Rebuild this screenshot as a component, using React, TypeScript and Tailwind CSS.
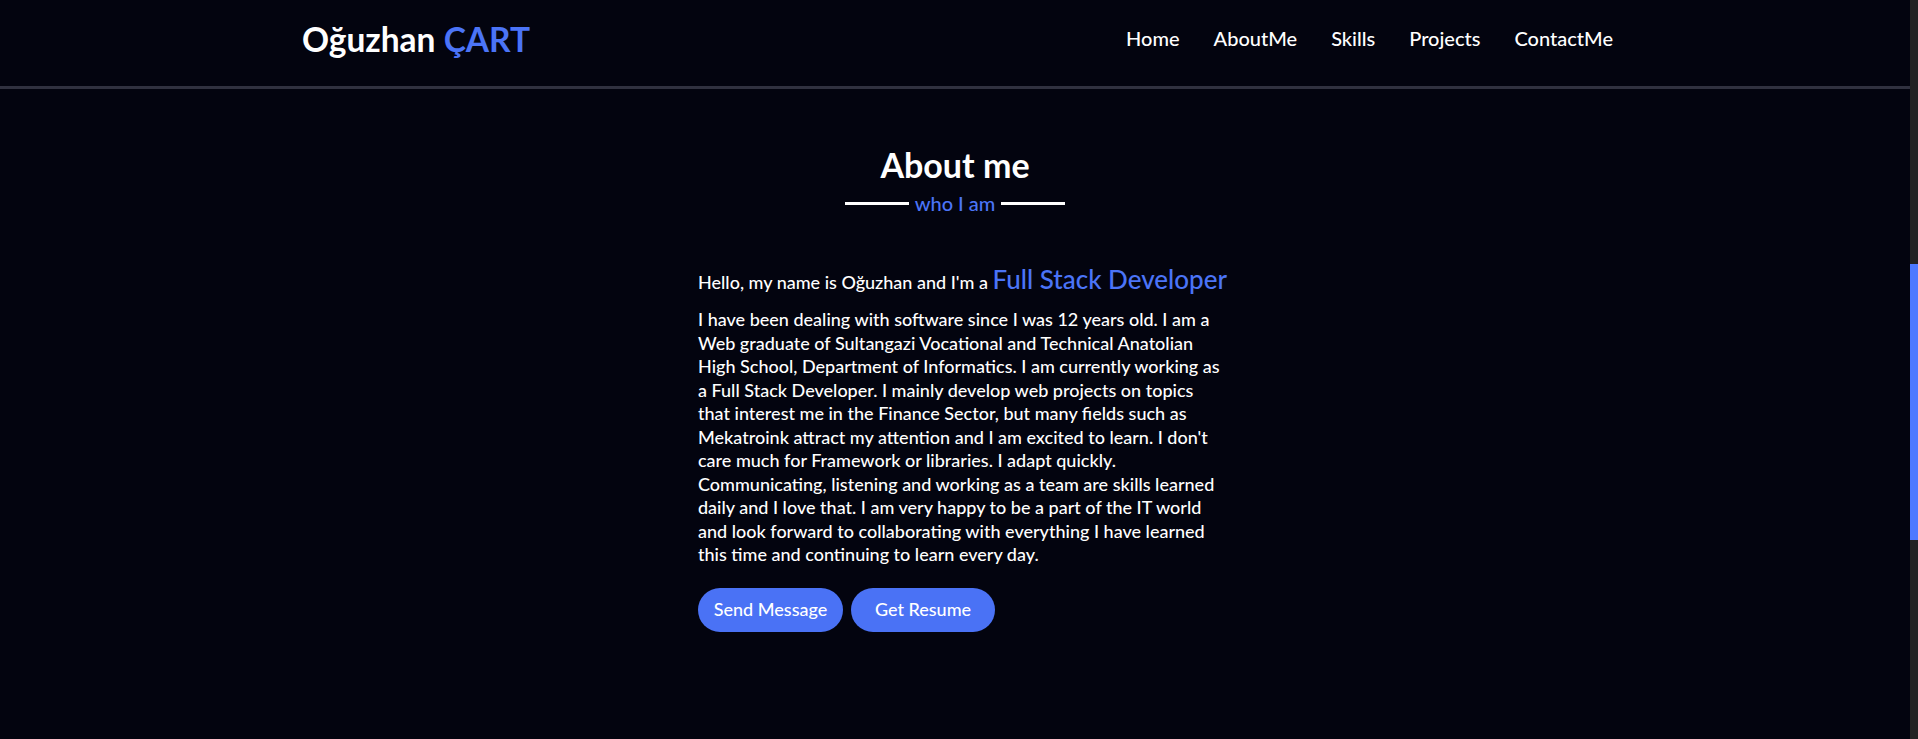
import React from "react";

const navItems = ["Home", "AboutMe", "Skills", "Projects", "ContactMe"];

const aboutLines = [
  "I have been dealing with software since I was 12 years old. I am a",
  "Web graduate of Sultangazi Vocational and Technical Anatolian",
  "High School, Department of Informatics. I am currently working as",
  "a Full Stack Developer. I mainly develop web projects on topics",
  "that interest me in the Finance Sector, but many fields such as",
  "Mekatroink attract my attention and I am excited to learn. I don't",
  "care much for Framework or libraries. I adapt quickly.",
  "Communicating, listening and working as a team are skills learned",
  "daily and I love that. I am very happy to be a part of the IT world",
  "and look forward to collaborating with everything I have learned",
  "this time and continuing to learn every day.",
];

const Header: React.FC = () => {
  return (
    <header className="h-[89px] border-b-[3px] border-[#30313f] bg-[#03040f]">
      <div className="flex h-full items-center justify-between pb-[6px] pl-[302px] pr-[297px]">
        <h1 className="text-[33.5px] font-bold leading-none text-white">
          Oğuzhan <span className="text-[#4b74f7]">ÇART</span>
        </h1>
        <nav className="flex items-center gap-[34px] pb-[4px] text-[20px] font-medium text-white">
          {navItems.map((item) => (
            <a key={item} href="#" className="leading-none">
              {item}
            </a>
          ))}
        </nav>
      </div>
    </header>
  );
};

const About: React.FC = () => {
  return (
    <section className="flex flex-col">
      <div className="flex flex-col items-center pt-[56px]">
        <h2 className="text-[34px] font-bold leading-[40px] text-white">About me</h2>
        <div className="mt-[6px] flex items-center gap-[6px]">
          <span className="h-[3px] w-[64px] bg-white" />
          <span className="text-[20px] font-medium leading-[24px] text-[#4b74f7]">who I am</span>
          <span className="h-[3px] w-[64px] bg-white" />
        </div>
      </div>
      <div className="ml-[698px] mt-[50px] w-[560px]">
        <p className="text-[18px] font-medium leading-[28px] text-white">
          Hello, my name is Oğuzhan and I'm a{" "}
          <span className="text-[26px] text-[#4b74f7]">Full Stack Developer</span>
        </p>
        <p className="mt-[12px] whitespace-nowrap text-[18px] font-medium leading-[23.5px] text-white">
          {aboutLines.map((line, i) => (
            <React.Fragment key={i}>
              {line}
              {i < aboutLines.length - 1 && <br />}
            </React.Fragment>
          ))}
        </p>
        <div className="mt-[21px] flex gap-[8px]">
          <button className="h-[44px] w-[145px] rounded-full bg-[#4a72f5] text-[18px] font-medium text-white">
            Send Message
          </button>
          <button className="h-[44px] w-[144px] rounded-full bg-[#4a72f5] text-[18px] font-medium text-white">
            Get Resume
          </button>
        </div>
      </div>
    </section>
  );
};

export default function App() {
  return (
    <div
      className="flex h-[739px] w-full overflow-hidden bg-[#03040f]"
      style={{ fontFamily: "Lato, 'Open Sans', sans-serif" }}
    >
      <main className="flex-1">
        <Header />
        <About />
      </main>
      <aside className="w-[8px] bg-[#232323] pt-[264px]">
        <div className="h-[276px] bg-[#4d79ff]" />
      </aside>
    </div>
  );
}
